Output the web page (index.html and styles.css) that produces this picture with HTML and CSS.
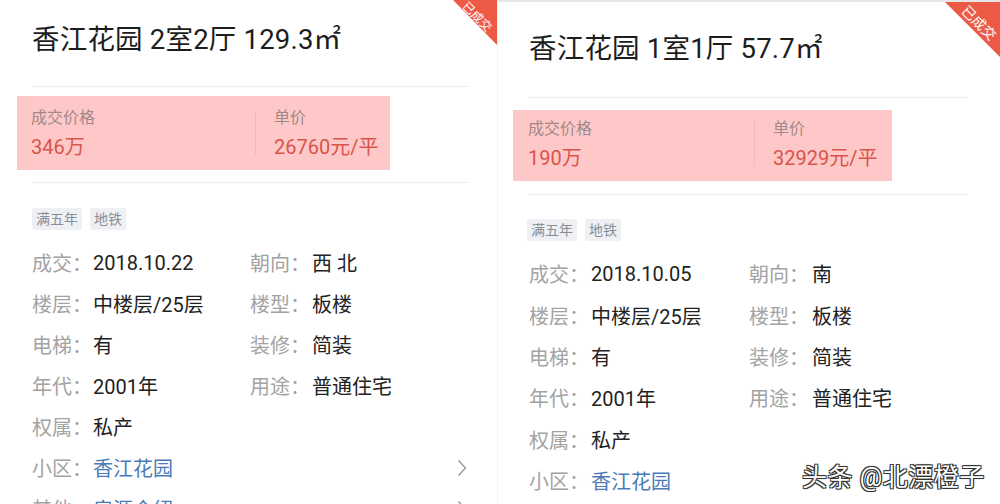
FILE: index.html
```html
<!DOCTYPE html>
<html lang="zh">
<head>
<meta charset="utf-8">
<link rel="stylesheet" href="styles.css">
</head>
<body>
<div class="page">
  <section class="panel panel-left">
    <div class="ribbon"><span>已成交</span></div>
    <h1 class="title">香江花园 2室2厅 129.3㎡</h1>
    <div class="divider"></div>
    <div class="price-box">
      <div class="price-col price-col-main">
        <div class="price-label">成交价格</div>
        <div class="price-value">346万</div>
      </div>
      <div class="price-sep"></div>
      <div class="price-col">
        <div class="price-label">单价</div>
        <div class="price-value">26760元/平</div>
      </div>
    </div>
    <div class="divider divider-2"></div>
    <div class="tags"><span class="tag">满五年</span><span class="tag">地铁</span></div>
    <div class="info">
      <span class="lbl">成交：</span><span class="val">2018.10.22</span><span class="lbl">朝向：</span><span class="val">西 北</span>
      <span class="lbl">楼层：</span><span class="val">中楼层/25层</span><span class="lbl">楼型：</span><span class="val">板楼</span>
      <span class="lbl">电梯：</span><span class="val">有</span><span class="lbl">装修：</span><span class="val">简装</span>
      <span class="lbl">年代：</span><span class="val">2001年</span><span class="lbl">用途：</span><span class="val">普通住宅</span>
      <span class="lbl">权属：</span><span class="val full">私产</span>
      <span class="lbl">小区：</span><span class="val link full">香江花园<svg class="chev" viewBox="0 0 10 18" width="10" height="18"><path d="M1.5 1.5 L8.5 9 L1.5 16.5" fill="none" stroke="#999" stroke-width="1.4"/></svg></span>
      <span class="lbl">其他：</span><span class="val link full">房源介绍<svg class="chev" viewBox="0 0 10 18" width="10" height="18"><path d="M1.5 1.5 L8.5 9 L1.5 16.5" fill="none" stroke="#999" stroke-width="1.4"/></svg></span>
    </div>
  </section>
  <section class="panel panel-right">
    <div class="ribbon"><span>已成交</span></div>
    <h1 class="title">香江花园 1室1厅 57.7㎡</h1>
    <div class="divider"></div>
    <div class="price-box">
      <div class="price-col price-col-main">
        <div class="price-label">成交价格</div>
        <div class="price-value">190万</div>
      </div>
      <div class="price-sep"></div>
      <div class="price-col">
        <div class="price-label">单价</div>
        <div class="price-value">32929元/平</div>
      </div>
    </div>
    <div class="divider divider-2"></div>
    <div class="tags"><span class="tag">满五年</span><span class="tag">地铁</span></div>
    <div class="info">
      <span class="lbl">成交：</span><span class="val">2018.10.05</span><span class="lbl">朝向：</span><span class="val">南</span>
      <span class="lbl">楼层：</span><span class="val">中楼层/25层</span><span class="lbl">楼型：</span><span class="val">板楼</span>
      <span class="lbl">电梯：</span><span class="val">有</span><span class="lbl">装修：</span><span class="val">简装</span>
      <span class="lbl">年代：</span><span class="val">2001年</span><span class="lbl">用途：</span><span class="val">普通住宅</span>
      <span class="lbl">权属：</span><span class="val full">私产</span>
      <span class="lbl">小区：</span><span class="val link full">香江花园</span>
    </div>
    <div class="watermark">头条 @北漂橙子</div>
  </section>
</div>
</body>
</html>
```

FILE: styles.css
```css
* { box-sizing: border-box; }
html, body { margin: 0; padding: 0; background: #fff; }
body {
  font-family: Roboto, "Noto Sans CJK SC", "Noto Sans", sans-serif;
  color: #222;
  width: 1000px;
  height: 504px;
  overflow: hidden;
}
.page { display: flex; width: 1000px; height: 504px; }
.panel {
  position: relative;
  height: 504px;
  overflow: hidden;
  background: #fff;
}
.panel-left { width: 497px; padding: 22px 29px 0 32px; }
.panel-right {
  width: 503px;
  padding: 29px 33px 0 31px;
  border-top: 2px solid #e6e6e6;
  border-left: 1px solid #f3f3f3;
}
.title {
  margin: 0;
  font-size: 27.5px;
  font-weight: 400;
  line-height: 36px;
  color: #1d1d1d;
  letter-spacing: 0.2px;
}
.divider { height: 1px; background: #ececec; margin-top: 28px; }
.panel-right .divider { margin-top: 30px; }
.price-box {
  display: flex;
  align-items: stretch;
  background: #ffc8c8;
  margin: 9px 0 0 -15px;
  width: 373px;
  height: 74px;
  padding: 0 0 0 14px;
}
.panel-right .price-box { margin: 12px 0 0 -16px; width: 379px; height: 71px; padding-left: 15px; }
.price-col { display: flex; flex-direction: column; padding-top: 11px; }
.panel-right .price-col { padding-top: 8px; }
.price-col-main { width: 224px; }
.panel-right .price-col-main { width: 226px; }
.price-sep { width: 1px; background: #f4b8b8; margin: 16px 18px 15px 0; }
.panel-right .price-sep { margin: 11px 18px 16px 0; }
.price-label { font-size: 16px; line-height: 22px; color: #a08888; }
.price-value { font-size: 20px; line-height: 28px; margin-top: 4px; color: #d9544a; }
.divider-2 { margin-top: 12px; }
.panel-right .divider-2 { margin-top: 13px; }
.tags { display: flex; gap: 8px; margin-top: 25px; margin-left: 0; }
.panel-right .tags { margin-top: 24px; margin-left: -2px; }
.tag {
  font-size: 14px;
  line-height: 22px;
  height: 22px;
  padding: 0 4px;
  background: #eef0f4;
  color: #8a8e96;
  border-radius: 2px;
}
.info {
  display: grid;
  grid-template-columns: 61px 157px 62px 1fr;
  grid-auto-rows: 41px;
  align-items: center;
  margin-top: 12px;
  font-size: 20px;
}
.panel-right .info { grid-template-columns: 62px 158px 63px 1fr; grid-auto-rows: 41.4px; margin-top: 12px; }
.lbl { color: #a3a3a3; white-space: nowrap; }
.val { color: #222; white-space: nowrap; }
.val.full { grid-column: 2 / 5; display: flex; align-items: center; justify-content: space-between; }
.link { color: #4a7ab8; }
.chev { margin-right: 1px; }
.ribbon {
  position: absolute;
  top: 0;
  right: 0;
  width: 44px;
  height: 45px;
  background: #ec5a45;
  clip-path: polygon(0 0, 100% 0, 100% 100%);
}
.panel-right .ribbon { width: 57px; height: 57px; top: -2px; }
.ribbon span {
  position: absolute;
  left: -1px;
  top: 10px;
  width: 50px;
  text-align: center;
  color: #fff;
  font-size: 12px;
  line-height: 14px;
  transform: rotate(45deg);
  transform-origin: 50% 50%;
}
.panel-right .ribbon span { left: 10px; top: 15px; width: 52px; font-size: 14px; line-height: 16px; }
.watermark {
  position: absolute;
  left: 304px;
  top: 459px;
  font-size: 25px;
  line-height: 34px;
  color: #fff;
  letter-spacing: 0.5px;
  text-shadow: -1px -1px 0 #333, 1px -1px 0 #333, -1px 1px 0 #333, 1px 1px 0 #333, 0 0 2px #000;
}
```
